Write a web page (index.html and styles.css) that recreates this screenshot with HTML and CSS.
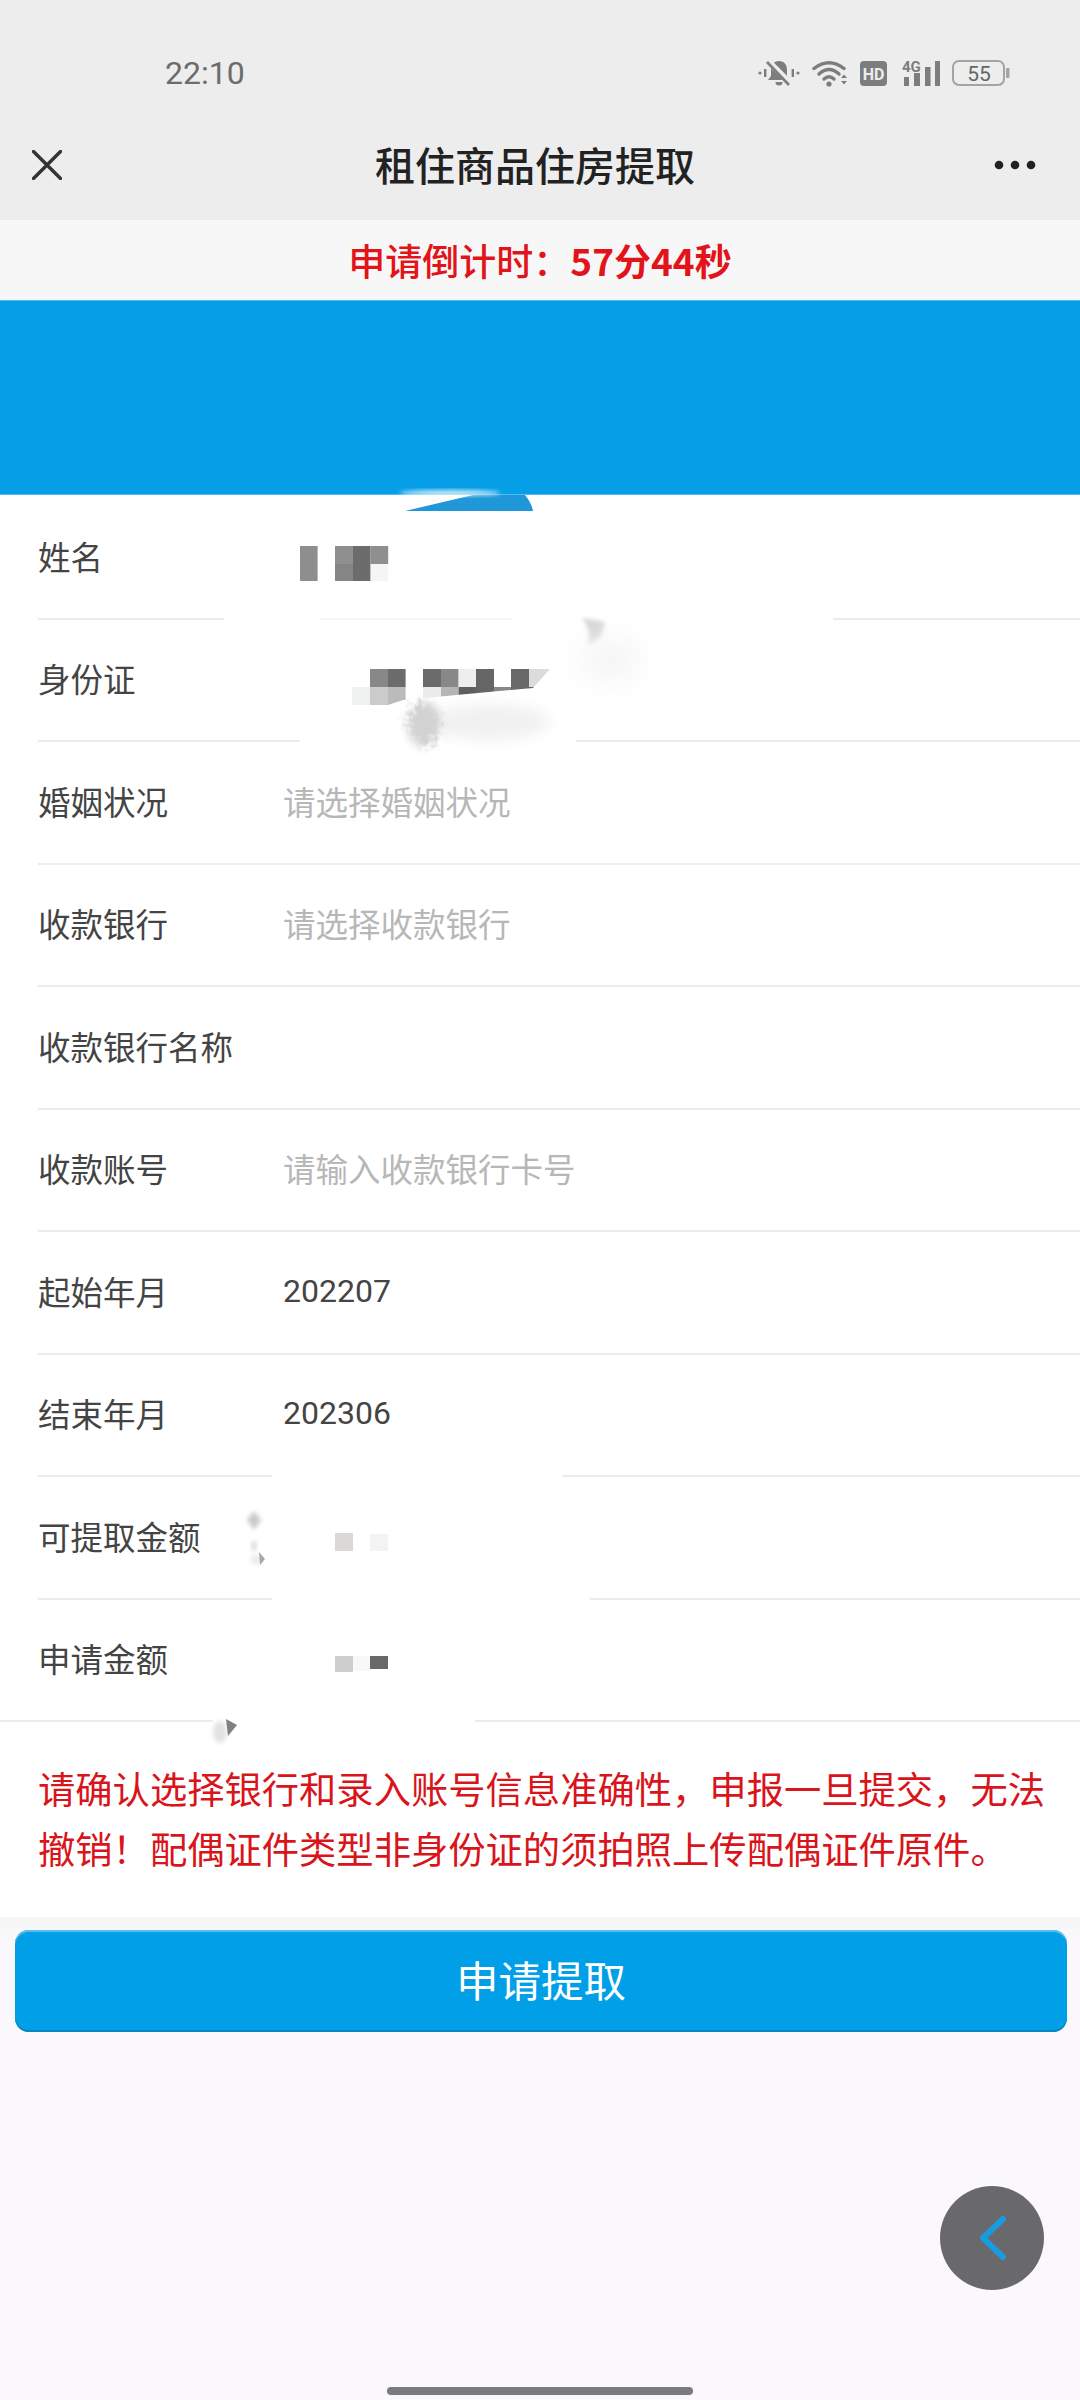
FILE: index.html
```html
<!DOCTYPE html>
<html lang="zh-CN">
<head>
<meta charset="utf-8">
<title>租住商品住房提取</title>
<link rel="stylesheet" href="styles.css">
</head>
<body>
<div class="screen">
  <header class="top">
    <div class="status">
      <span class="time">22:10</span>
      <div class="status-icons">
        <svg class="ic-bell" viewBox="0 0 42 28" aria-hidden="true">
          <circle cx="2" cy="14" r="1.6" fill="#7d7d7d"/><circle cx="40" cy="14" r="1.6" fill="#7d7d7d"/>
          <rect x="6" y="10" width="2.4" height="8" fill="#7d7d7d"/><rect x="33.6" y="10" width="2.4" height="8" fill="#7d7d7d"/>
          <path d="M21 2c-5.500 0-8 4-8 9v6l-3 4h22l-3-4v-6c0-5-2.500-9-8-9z" fill="#7d7d7d"/>
          <path d="M17.500 23h7a3.500 3.500 0 0 1-7 0z" fill="#7d7d7d"/>
          <path d="M10 2l24 24" stroke="#ededed" stroke-width="6"/>
          <path d="M9 3l22 23" stroke="#7d7d7d" stroke-width="2.600"/>
        </svg>
        <svg class="ic-wifi" viewBox="0 0 36 28" aria-hidden="true">
          <g fill="none" stroke="#7d7d7d" stroke-width="3.400" stroke-linecap="round">
            <path d="M2 9.500Q17-2 32 9.500"/><path d="M7 15Q17 6 27 15"/><path d="M12 20Q17 15.500 22 20"/>
          </g>
          <circle cx="17" cy="25" r="2.600" fill="#7d7d7d"/>
          <path d="M29 19l3-3.500 3 3.500zM29 22l3 3.500 3-3.500z" fill="#7d7d7d"/>
        </svg>
        <svg class="ic-hd" viewBox="0 0 27 25" aria-hidden="true">
          <rect width="27" height="25" rx="4" fill="#7d7d7d"/>
          <text x="13.500" y="18.500" text-anchor="middle" class="hd-text">HD</text>
        </svg>
        <svg class="ic-signal" viewBox="0 0 41 28" aria-hidden="true">
          <text x="3" y="13" class="sig-text">4G</text>
          <rect x="5" y="18" width="5" height="9" fill="#7d7d7d"/>
          <rect x="15" y="14" width="6" height="13" fill="#7d7d7d"/>
          <rect x="26" y="8" width="5.500" height="19" fill="#7d7d7d"/>
          <rect x="36" y="2" width="5" height="25" fill="#7d7d7d"/>
        </svg>
        <svg class="ic-battery" viewBox="0 0 58 28" aria-hidden="true">
          <rect x="1" y="2" width="51" height="24" rx="6" fill="none" stroke="#a3a3a3" stroke-width="2"/>
          <rect x="54" y="9" width="3.500" height="10" rx="1" fill="#a3a3a3"/>
          <text x="27" y="21.500" text-anchor="middle" class="bat-text">55</text>
        </svg>
      </div>
    </div>
    <div class="nav">
      <svg class="ic-close" viewBox="0 0 30 30" aria-hidden="true">
        <path d="M1.500 1.500l27 27M28.500 1.500l-27 27" fill="none" stroke="#333" stroke-width="3.400" stroke-linecap="round"/>
      </svg>
      <h1 class="title">租住商品住房提取</h1>
      <svg class="ic-more" viewBox="0 0 42 10" aria-hidden="true">
        <circle cx="5" cy="5" r="4.300" fill="#222"/><circle cx="21" cy="5" r="4.300" fill="#222"/><circle cx="37" cy="5" r="4.300" fill="#222"/>
      </svg>
    </div>
  </header>

  <div class="countdown">申请倒计时：<b>57分44秒</b></div>
  <div class="banner"></div>

  <main class="form">
    <div class="row"><span class="label">姓名</span></div>
    <div class="row"><span class="label">身份证</span></div>
    <div class="row"><span class="label">婚姻状况</span><span class="hint">请选择婚姻状况</span></div>
    <div class="row"><span class="label">收款银行</span><span class="hint">请选择收款银行</span></div>
    <div class="row"><span class="label">收款银行名称</span></div>
    <div class="row"><span class="label">收款账号</span><span class="hint">请输入收款银行卡号</span></div>
    <div class="row"><span class="label">起始年月</span><span class="value">202207</span></div>
    <div class="row"><span class="label">结束年月</span><span class="value">202306</span></div>
    <div class="row"><span class="label">可提取金额</span></div>
    <div class="row row-last"><span class="label">申请金额</span></div>
  </main>

  <section class="notice">
    <p class="notice-line">请确认选择银行和录入账号信息准确性，申报一旦提交，无法</p>
    <p class="notice-line">撤销！配偶证件类型非身份证的须拍照上传配偶证件原件。</p>
  </section>

  <div class="actions"><button class="submit" type="button">申请提取</button></div>

  <svg class="redact" viewBox="0 480 1080 1270" aria-hidden="true">
    <defs>
      <filter id="b2" x="-30%" y="-30%" width="160%" height="160%"><feGaussianBlur stdDeviation="2"/></filter>
      <filter id="b7" x="-60%" y="-60%" width="220%" height="220%"><feGaussianBlur stdDeviation="7"/></filter>
      <filter id="b14" x="-60%" y="-60%" width="220%" height="220%"><feGaussianBlur stdDeviation="14"/></filter>
      <filter id="speck" x="-60%" y="-60%" width="220%" height="220%">
        <feGaussianBlur stdDeviation="4" result="soft"/>
        <feTurbulence type="fractalNoise" baseFrequency="0.18" numOctaves="2" seed="4" result="noise"/>
        <feDisplacementMap in="soft" in2="noise" scale="14"/>
      </filter>
      <clipPath id="idclip"><polygon points="340,660 558,660 533,688 403,700 388,705 340,705"/></clipPath>
    </defs>

    <!-- smears over the banner edge -->
    <path d="M405 511L473 495H525C529 500 532 505 533 511Z" fill="#1f97d8"/>
    <ellipse cx="450" cy="493" rx="50" ry="3" fill="#fff" opacity=".8" filter="url(#b2)"/>

    <!-- wiped stretches of the row rules -->
    <g fill="#fff">
      <rect x="224" y="612" width="96" height="12"/>
      <rect x="320" y="612" width="193" height="12" opacity=".5"/>
      <rect x="513" y="612" width="320" height="12"/>
      <rect x="300" y="735" width="276" height="12"/>
      <rect x="272" y="1470" width="290" height="12"/>
      <rect x="272" y="1592" width="318" height="12"/>
      <rect x="213" y="1715" width="262" height="12"/>
    </g>

    <!-- grey residue -->
    <ellipse cx="490" cy="722" rx="60" ry="18" fill="#f1f1f1" filter="url(#b7)"/>
    <ellipse cx="424" cy="724" rx="17" ry="23" fill="#d2d2d2" filter="url(#speck)"/>
    <path d="M582 618L605 622L601 637L588 645Q592 630 582 618Z" fill="#d4d4d4" filter="url(#b2)"/>
    <ellipse cx="610" cy="660" rx="30" ry="24" fill="#f6f6f6" filter="url(#b14)"/>
    <path d="M247 1520l7-9 7 9-7 10z" fill="#c9c9c9" filter="url(#b2)"/>
    <path d="M251 1545l3-6 3 6-3 9z" fill="#d8d8d8" filter="url(#b2)"/>
    <ellipse cx="256" cy="1560" rx="6" ry="5" fill="#ececec" filter="url(#b2)"/>
    <path d="M259 1552l6 7-5 6z" fill="#a8a8a8"/>
    <ellipse cx="220" cy="1732" rx="7" ry="11" fill="#e2e2e2" filter="url(#b2)"/>
    <path d="M226 1719l11 6-9 11z" fill="#808080"/>

    <!-- name mosaic -->
    <rect x="300" y="546" width="17.600" height="35" fill="#8e8e8e"/>
    <rect x="335" y="546" width="18" height="18" fill="#8f8f8f"/>
    <rect x="335" y="564" width="18" height="17" fill="#858585"/>
    <rect x="353" y="546" width="17.600" height="35" fill="#6c6c6c"/>
    <rect x="370.600" y="546" width="17.600" height="18" fill="#8f8f8f"/>
    <rect x="370.600" y="564" width="17.600" height="17" fill="#f5f5f5"/>

    <!-- id mosaic -->
    <g clip-path="url(#idclip)">
      <rect x="352" y="687" width="18" height="18" fill="#f0f1f1"/>
      <rect x="370" y="669" width="18" height="18" fill="#888"/>
      <rect x="388" y="669" width="17.600" height="18" fill="#6c6c6c"/>
      <rect x="370" y="687" width="18" height="18" fill="#cbcbcb"/>
      <rect x="388" y="687" width="17.600" height="18" fill="#bbb"/>
      <rect x="423" y="669" width="18" height="18" fill="#6b6b6b"/>
      <rect x="441" y="669" width="17.600" height="18" fill="#888"/>
      <rect x="423" y="687" width="18" height="18" fill="#ebebeb"/>
      <rect x="441" y="687" width="17.600" height="18" fill="#b5b5b5"/>
      <rect x="458.600" y="669" width="17.600" height="18" fill="#eeeeee"/>
      <rect x="458.600" y="687" width="17.600" height="18" fill="#5f5f5f"/>
      <rect x="476" y="669" width="18" height="36" fill="#666"/>
      <rect x="494" y="687" width="17.600" height="18" fill="#888"/>
      <rect x="511" y="669" width="18" height="36" fill="#686868"/>
      <rect x="529" y="669" width="30" height="18" fill="#dcdcdc"/>
      <rect x="529" y="687" width="17.600" height="18" fill="#666"/>
    </g>

    <!-- amount mosaics -->
    <rect x="335" y="1533" width="18" height="18" fill="#dcd8d8"/>
    <rect x="370" y="1534" width="18" height="17" fill="#f4f3f3"/>
    <rect x="335" y="1656" width="18" height="16" fill="#cecece"/>
    <rect x="353" y="1656" width="17" height="15" fill="#f8f8f8"/>
    <rect x="370" y="1656" width="18" height="13" fill="#686868"/>
  </svg>

  <button class="fab" type="button" aria-label="返回">
    <svg class="ic-back" viewBox="0 0 26 44" aria-hidden="true">
      <path d="M23 3L3 22l20 19" fill="none" stroke="#1a9be0" stroke-width="6" stroke-linecap="round" stroke-linejoin="round"/>
    </svg>
  </button>
  <div class="home-bar"></div>
</div>
</body>
</html>
```

FILE: styles.css
```css
* { box-sizing: border-box; }
html, body { margin: 0; padding: 0; }
body {
  background: #faf8fd;
  font-family: "Noto Sans CJK SC", "Noto Sans", sans-serif;
}
.screen {
  position: relative;
  width: 1080px;
  height: 2400px;
  overflow: hidden;
  background: #faf8fd;
}
.top { background: #ededed; height: 220px; }
.status {
  height: 120px;
  padding: 26px 70px 0 165px;
  display: flex;
  align-items: center;
}
.time {
  font: 400 32px/1 Roboto, sans-serif;
  color: #6c6c6c;
}
.status-icons {
  margin-left: auto;
  display: flex;
  align-items: center;
  gap: 12px;
}
.ic-bell { width: 42px; height: 28px; }
.ic-wifi { width: 36px; height: 28px; }
.ic-hd { width: 27px; height: 25px; }
.ic-signal { width: 41px; height: 28px; }
.ic-battery { width: 58px; height: 28px; }
.hd-text { font: 700 16px Roboto, sans-serif; fill: #ededed; }
.sig-text { font: 700 15px Roboto, sans-serif; fill: #7d7d7d; }
.bat-text { font: 400 21px Roboto, sans-serif; fill: #666; }

.nav {
  height: 90px;
  padding: 0 44px 0 32px;
  display: flex;
  align-items: center;
}
.ic-close { width: 30px; height: 30px; flex: none; }
.ic-more { width: 42px; height: 10px; flex: none; margin-top: -1px; }
.title {
  flex: 1;
  margin: -3px 0 0;
  padding-left: 14px;
  text-align: center;
  font-size: 40px;
  font-weight: 500;
  line-height: 1;
  color: #222;
}
.countdown {
  height: 80px;
  background: #f7f7f7;
  display: flex;
  align-items: center;
  justify-content: center;
  font-size: 37px;
  font-weight: 500;
  color: #e2141a;
}
.countdown b { font-weight: 700; }
.banner {
  height: 195px;
  background: #069ee6;
  border-top: 1px solid #4fbdf0;
  border-bottom: 1px solid #4fbdf0;
}
.form {
  background: #fff;
  padding-top: 2px;
}
.row {
  height: 122.5px;
  margin-left: 38px;
  padding-bottom: 3px;
  display: flex;
  align-items: center;
  border-bottom: 2px solid #ececec;
  font-size: 32.500px;
  line-height: 1;
}
.row-last { margin-left: 0; padding-left: 38px; }
.label { width: 245px; flex: none; color: #444; }
.value { color: #444; font-family: Roboto, sans-serif; font-size: 32px; }
.hint { color: #b7b7b7; }
.notice {
  height: 195px;
  background: #fff;
  padding: 36px 0 0 38px;
}
.notice-line {
  margin: 0;
  font-size: 37.300px;
  line-height: 60px;
  color: #d9141a;
  white-space: nowrap;
}
.actions {
  padding: 13px 13px 0 15px;
  background: linear-gradient(#f6f6f6, #faf8fd 26px);
}
.submit {
  display: block;
  width: 100%;
  height: 102px;
  padding: 0 0 4px;
  border: 0;
  border-radius: 14px;
  background: #009fe8;
  box-shadow: inset 0 2px 0 #57bfe9, inset 0 -2px 0 #0a86bf;
  color: #fff;
  font-family: inherit;
  font-size: 42.500px;
  line-height: 1;
}
.redact {
  position: absolute;
  left: 0;
  top: 480px;
  width: 1080px;
  height: 1270px;
  pointer-events: none;
}
.fab {
  position: absolute;
  left: 940px;
  top: 2186px;
  width: 104px;
  height: 104px;
  padding: 0;
  border: 0;
  border-radius: 50%;
  background: #69696b;
  display: flex;
  align-items: center;
  justify-content: center;
}
.ic-back { width: 26px; height: 44px; margin-left: 2px; }
.home-bar {
  position: absolute;
  left: 387px;
  top: 2387px;
  width: 306px;
  height: 8px;
  border-radius: 4px;
  background: #7b7a7e;
}
```
